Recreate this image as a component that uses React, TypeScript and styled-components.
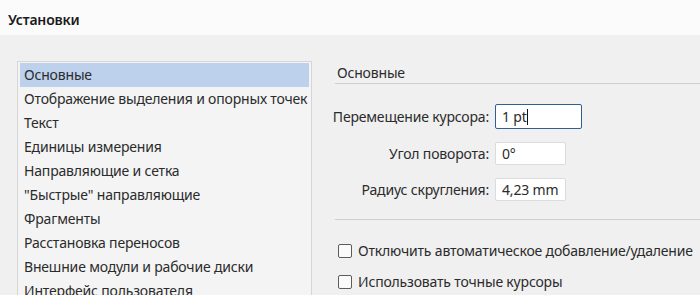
import * as React from 'react'
import styled, { createGlobalStyle } from 'styled-components'

const GlobalStyle = createGlobalStyle`
  html, body {
    margin: 0;
    padding: 0;
    background: #f0f0f0;
  }
  body {
    font-family: "Noto Sans", "Open Sans", sans-serif;
    letter-spacing: -0.18px;
    color: #2b2b2b;
  }
`

const Window = styled.div`
  width: 700px;
  height: 295px;
  overflow: hidden;
  background: #f0f0f0;
  display: flex;
  flex-direction: column;
`

const TitleBar = styled.div`
  height: 35px;
  box-sizing: border-box;
  padding: 4px 0 0 8px;
  flex: none;
  background: #fbfbfb;
  display: flex;
  align-items: center;
  font-size: 14px;
  font-weight: 600;
  color: #1a1a1a;
`

const Body = styled.div`
  display: grid;
  grid-template-columns: 295px 1fr;
  column-gap: 23px;
  padding: 26px 0 0 17px;
`

const CategoryList = styled.ul`
  list-style: none;
  margin: 0;
  padding: 1px 2px;
  border: 1px solid #d6d6d6;
  background: #f4f4f4;
  height: 260px;
`

const Category = styled.li<{ $active?: boolean }>`
  height: 24px;
  line-height: 24px;
  padding-left: 4px;
  font-size: 14px;
  white-space: nowrap;
  background: ${(p) => (p.$active ? '#bdd1ec' : 'transparent')};
`

const Panel = styled.div`
  display: flex;
  flex-direction: column;
`

const SectionTitle = styled.div`
  font-size: 14px;
  height: 21px;
  line-height: 22px;
  padding-left: 2px;
  border-bottom: 1px solid #cfcfcf;
  margin-top: 1px;
`

const FieldGrid = styled.div`
  display: grid;
  grid-template-columns: 154px auto;
  column-gap: 6px;
  row-gap: 13px;
  align-items: center;
  padding: 20px 0 18px;
  border-bottom: 1px solid #cfcfcf;
  justify-items: start;
`

const Label = styled.label`
  font-size: 14px;
  justify-self: end;
  white-space: nowrap;
`

const Field = styled.div<{ $width: number; $focused?: boolean }>`
  width: ${(p) => p.$width}px;
  height: ${(p) => (p.$focused ? 25 : 23)}px;
  box-sizing: border-box;
  background: #ffffff;
  border: 1px solid ${(p) => (p.$focused ? '#2f5f93' : '#dcdcdc')};
  border-radius: 2px;
  font-size: 14px;
  padding-left: 6px;
  display: flex;
  align-items: center;
`

const Caret = styled.span`
  display: inline-block;
  width: 1px;
  height: 16px;
  background: #111;
`

const Checks = styled.div`
  display: flex;
  flex-direction: column;
  gap: 12px;
  padding: 21px 0 0 3px;
`

const CheckRow = styled.label`
  display: flex;
  align-items: center;
  gap: 6px;
  font-size: 14px;
  white-space: nowrap;
`

const Box = styled.span`
  width: 12px;
  height: 12px;
  border: 1px solid #5c5c5c;
  border-radius: 2px;
  background: #fafafa;
  flex: none;
`

const categories = [
  'Основные',
  'Отображение выделения и опорных точек',
  'Текст',
  'Единицы измерения',
  'Направляющие и сетка',
  '"Быстрые" направляющие',
  'Фрагменты',
  'Расстановка переносов',
  'Внешние модули и рабочие диски',
  'Интерфейс пользователя',
]

export default function App() {
  return (
    <Window>
      <GlobalStyle />
      <TitleBar>Установки</TitleBar>
      <Body>
        <CategoryList>
          {categories.map((c, i) => (
            <Category key={c} $active={i === 0}>{c}</Category>
          ))}
        </CategoryList>
        <Panel>
          <SectionTitle>Основные</SectionTitle>
          <FieldGrid>
            <Label>Перемещение курсора:</Label>
            <Field $width={87} $focused>1 pt<Caret /></Field>
            <Label>Угол поворота:</Label>
            <Field $width={71}>0°</Field>
            <Label>Радиус скругления:</Label>
            <Field $width={71}>4,23 mm</Field>
          </FieldGrid>
          <Checks>
            <CheckRow><Box />Отключить автоматическое добавление/удаление</CheckRow>
            <CheckRow><Box />Использовать точные курсоры</CheckRow>
          </Checks>
        </Panel>
      </Body>
    </Window>
  )
}
